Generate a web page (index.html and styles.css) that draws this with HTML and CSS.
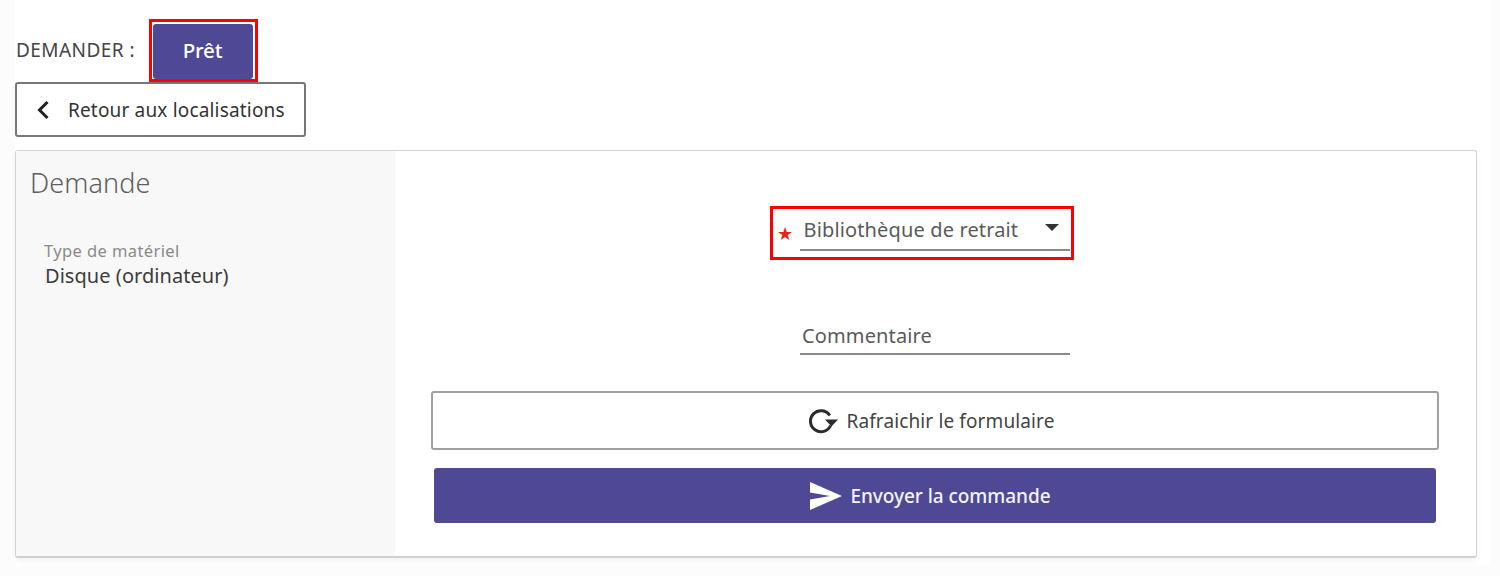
FILE: index.html
```html
<!DOCTYPE html>
<html lang="fr">
<head>
<meta charset="utf-8">
<title>Demande</title>
<link rel="stylesheet" href="styles.css">
</head>
<body>
<main class="page">
  <div class="request-row">
    <span class="request-label">DEMANDER :</span>
    <div class="highlight highlight-btn"><button class="btn-pret">Prêt</button></div>
  </div>
  <button class="btn-back">
    <svg class="icon-chevron" viewBox="0 0 14 20" width="14" height="20"><path d="M11.5 2 L3.5 10 L11.5 18" fill="none" stroke="#1f1f1f" stroke-width="3"/></svg>
    <span>Retour aux localisations</span>
  </button>
  <section class="card">
    <aside class="side">
      <h2 class="side-title">Demande</h2>
      <div class="side-field">
        <div class="side-label">Type de matériel</div>
        <div class="side-value">Disque (ordinateur)</div>
      </div>
    </aside>
    <div class="form">
      <div class="highlight highlight-select">
        <span class="star">★</span>
        <div class="select">
          <span>Bibliothèque de retrait</span>
          <span class="caret"></span>
        </div>
      </div>
      <div class="comment">Commentaire</div>
      <button class="btn-refresh">
        <svg viewBox="0 0 30 26" width="30" height="26"><path d="M21.8 7.5 A10.5 10.5 0 1 0 22.6 17.5" fill="none" stroke="#2b2b2b" stroke-width="3"/><path d="M17 11.5 H30 L23.5 18.5 Z" fill="#2b2b2b"/></svg>
        <span>Rafraichir le formulaire</span>
      </button>
      <button class="btn-send">
        <svg viewBox="0 0 32 28" width="32" height="28"><path d="M0 0 L32 14 L0 28 L0 17.5 L20 14 L0 10.5 Z" fill="#fff"/></svg>
        <span>Envoyer la commande</span>
      </button>
    </div>
  </section>
</main>
</body>
</html>
```
FILE: styles.css
```css
* { box-sizing: border-box; }
html, body { margin: 0; height: 576px; overflow: hidden; background: #fcfcfc; }
body { font-family: "Noto Sans", "Open Sans", sans-serif; color: #3a3a3a; }
button { font-family: inherit; cursor: pointer; }
.page { margin-left: 15px; width: 1475px; padding-top: 19px; height: 566px; background: #fff; }
.request-row { display: flex; align-items: center; height: 63px; }
.request-label { font-size: 19px; letter-spacing: 0.45px; margin-left: 1px; width: 133px; color: #444; margin-top: -1px; }
.highlight { border: 3px solid #f00; }
.highlight-btn { width: 109px; height: 63px; padding: 2px 2px 0 0; display: flex; }
.btn-pret { width: 100px; height: 55px; margin-left: 1px; background: #4e4895; color: #fff; border: 0; border-radius: 3px; font-size: 20.5px; font-weight: 500; letter-spacing: -0.2px; padding: 0 1px 3px 0; }
.btn-back { display: flex; align-items: center; width: 291px; height: 55px; background: #fff; border: 2px solid #777; border-radius: 3px; padding: 0 0 0 19px; font-size: 19px; letter-spacing: 0.17px; color: #333; }
.btn-back span { margin-left: 18px; }
.icon-chevron { flex: none; }
.card { display: flex; width: 1462px; height: 408px; margin-top: 13px; border: 1px solid #d3d3d3; border-bottom: 2px solid #cfcfcf; border-radius: 3px; box-shadow: 0 3px 6px rgba(0,0,0,.05); background: #fff; }
.side { width: 379px; flex: none; background: #f8f8f8; padding: 14px 14px; }
.side-title { margin: 0; font-size: 27px; font-weight: 300; line-height: 35px; letter-spacing: 0.1px; color: #5f5f5f; }
.side-field { margin: 40px 0 0 14px; }
.side-label { font-size: 16.5px; line-height: 22px; color: #8a8a8a; letter-spacing: 0.4px; }
.side-value { font-size: 20px; line-height: 27px; letter-spacing: 0.05px; color: #3c3c3c; margin-left: 1px; }
.form { flex: 1; display: flex; flex-direction: column; align-items: center; padding: 55px 2px 0 0; }
.highlight-select { display: flex; align-items: flex-end; width: 304px; height: 54px; padding: 0 1px 6px 4px; margin-right: 26px; }
.star { color: #e5231b; font-size: 18px; width: 23px; line-height: 20px; margin-bottom: 8px; }
.select { flex: 1; display: flex; justify-content: space-between; height: 38px; padding: 3px 0 0 4px; border-bottom: 2px solid #8a8a8a; font-size: 20px; letter-spacing: 0.14px; color: #5a5a5a; }
.caret { width: 0; height: 0; margin: 8px 11px 0 0; border: 7.5px solid transparent; border-top: 7px solid #333; border-bottom: 0; }
.comment { width: 270px; margin: 60px 0 0 1px; height: 35px; padding: 0 0 0 2px; border-bottom: 2px solid #8a8a8a; font-size: 20px; line-height: 31px; letter-spacing: 0.13px; color: #5a5a5a; }
.btn-refresh { display: flex; align-items: center; justify-content: center; width: 1008px; height: 59px; margin-top: 36px; padding: 0 6px 0 0; background: #fff; border: 2px solid #a0a0a0; border-radius: 3px; font-size: 19px; letter-spacing: 0.12px; color: #444; }
.btn-refresh span { margin-left: 8px; }
.btn-send { display: flex; align-items: center; justify-content: center; width: 1002px; height: 55px; margin-top: 18px; padding: 0 8px 0 0; background: #4e4895; color: #f4f4fb; border: 0; border-radius: 3px; font-size: 19px; font-weight: 500; letter-spacing: -0.05px; }
.btn-send span { margin-left: 8px; }
```
